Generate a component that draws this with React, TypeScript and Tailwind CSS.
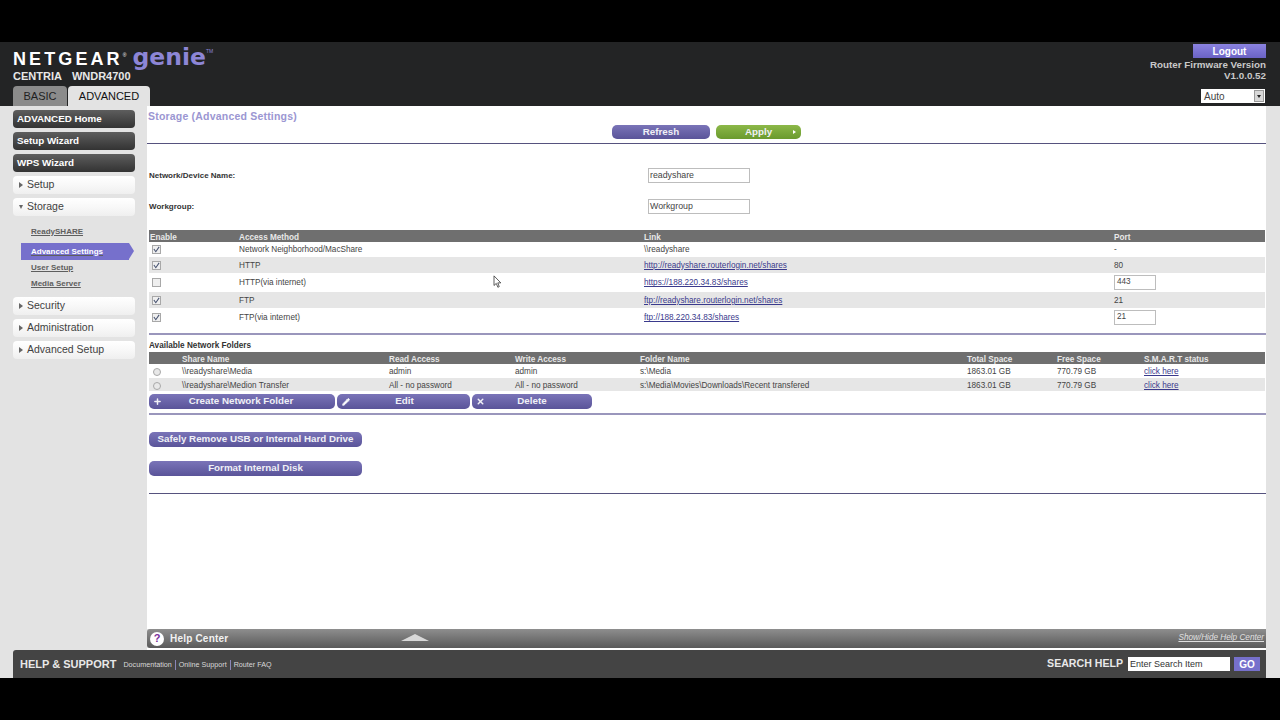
import { Plus, Pencil, X } from "lucide-react";

const accessRows = [
  { on: true, method: "Network Neighborhood/MacShare", link: "\\\\readyshare", isLink: false, port: "-", h: "h-[15px]", alt: false },
  { on: true, method: "HTTP", link: "http://readyshare.routerlogin.net/shares", isLink: true, port: "80", h: "h-[16px]", alt: true },
  { on: false, method: "HTTP(via internet)", link: "https://188.220.34.83/shares", isLink: true, port: "443", input: true, h: "h-[19px]", alt: false },
  { on: true, method: "FTP", link: "ftp://readyshare.routerlogin.net/shares", isLink: true, port: "21", h: "h-[16px]", alt: true },
  { on: true, method: "FTP(via internet)", link: "ftp://188.220.34.83/shares", isLink: true, port: "21", input: true, h: "h-[19px]", alt: false },
];

const folders = [
  { name: "\\\\readyshare\\Media", read: "admin", write: "admin", path: "s:\\Media", h: "h-[14px]", alt: false },
  { name: "\\\\readyshare\\Medion Transfer", read: "All - no password", write: "All - no password", path: "s:\\Media\\Movies\\Downloads\\Recent transfered", h: "h-[13px]", alt: true },
];

const accessCols = "grid grid-cols-[89px_405px_470px_1fr] items-center";
const folderCols = "grid grid-cols-[33px_207px_126px_125px_327px_90px_87px_1fr] items-center";
const purpleBtn = "flex items-center justify-center rounded-[5px] bg-gradient-to-b from-[#7a74b8] to-[#5a5499] text-[#f0f0f6] font-bold text-[9.8px]";
const cell = "pt-[2px]";

function DarkItem({ label }: { label: string }) {
  return (
    <div className="h-[18px] rounded-[4px] bg-gradient-to-b from-[#5e5e5e] to-[#333333] pl-[4px] flex items-center text-[9.8px] font-bold text-white">
      {label}
    </div>
  );
}

function LightItem({ label, open }: { label: string; open?: boolean }) {
  return (
    <div className="h-[18px] rounded-[4px] bg-gradient-to-b from-[#ffffff] via-[#f8f8f8] to-[#efefef] pl-[6px] flex items-center gap-[4px] text-[10.5px] text-[#3f3f3f]">
      <span className={open ? "w-0 h-0 border-x-[2.5px] border-x-transparent border-t-[4px] border-t-[#666666]" : "w-0 h-0 border-y-[3px] border-y-transparent border-l-[4px] border-l-[#666666]"} />
      {label}
    </div>
  );
}

function Check({ on }: { on: boolean }) {
  return (
    <span className="w-[9px] h-[9px] border border-[#a8a8a8] bg-[#efefef] flex items-center justify-center">
      {on && (
        <svg viewBox="0 0 8 8" className="w-[7px] h-[7px]">
          <path d="M1 3.5 L3.2 6.5 L7 1" fill="none" stroke="#44506e" strokeWidth="1.2" />
        </svg>
      )}
    </span>
  );
}

export default function App() {
  return (
    <div className="w-[1280px] h-[720px] overflow-hidden bg-black flex flex-col font-['Liberation_Sans',Arial,sans-serif]">
      <div className="h-[42px] shrink-0" />

      {/* Header */}
      <header className="h-[64px] shrink-0 bg-[#232425] flex justify-between pl-[13px] pr-[14px]">
        <div className="flex flex-col">
          <div className="flex items-start h-[26px]">
            <span className="text-[18px] leading-[20px] font-bold text-white tracking-[3.1px] mt-[7px]">NETGEAR</span>
            <span className="text-[5px] text-white mt-[10px]">®</span>
            <span className="ml-[6px] mt-[2px] text-[23.5px] leading-[26px] font-bold text-[#8d86d6] font-['DejaVu_Sans',sans-serif]">genie</span>
            <span className="text-[5px] text-[#8d86d6] mt-[6px]">TM</span>
          </div>
          <div className="text-[11px] leading-[12px] font-bold text-[#e8e8e8] flex gap-[10px] h-[18px] mt-[2px]">
            <span>CENTRIA</span>
            <span>WNDR4700</span>
          </div>
          <div className="flex gap-[1px] h-[20px] items-end">
            <div className="w-[54px] h-[20px] rounded-t-[4px] bg-[#8b8b8b] flex items-center justify-center text-[11px] text-[#1f1f1f]">BASIC</div>
            <div className="w-[82px] h-[20px] rounded-t-[4px] bg-[#e3e3e3] flex items-center justify-center text-[11px] text-[#111111]">ADVANCED</div>
          </div>
        </div>
        <div className="flex flex-col items-end pt-[2px]">
          <div className="w-[73px] h-[14px] bg-gradient-to-b from-[#8b83e0] to-[#6a62c4] flex items-center justify-center text-[10px] font-bold text-white">Logout</div>
          <div className="mt-[1px] text-[9.8px] leading-[11px] font-bold text-[#c9c9c9] text-right">
            Router Firmware Version
            <br />
            V1.0.0.52
          </div>
          <div className="mt-[8px] mr-[1px] w-[64px] h-[14px] bg-white flex items-center justify-between pl-[3px] pr-[1px] text-[10px] text-[#444444]">
            Auto
            <span className="w-[10px] h-[12px] bg-[#d8d8d8] border border-[#9a9a9a] flex items-center justify-center">
              <span className="w-0 h-0 border-x-[2.5px] border-x-transparent border-t-[3px] border-t-[#222222]" />
            </span>
          </div>
        </div>
      </header>

      {/* Body */}
      <div className="h-[544px] shrink-0 flex bg-[#e3e3e3]">
        <aside className="w-[147px] shrink-0 pt-[4px] pl-[13px] pr-[12px] flex flex-col">
          <div className="flex flex-col gap-[4px]">
            <DarkItem label="ADVANCED Home" />
            <DarkItem label="Setup Wizard" />
            <DarkItem label="WPS Wizard" />
            <LightItem label="Setup" />
            <LightItem label="Storage" open />
          </div>
          <div className="flex flex-col text-[8px] font-bold text-[#5e5e5e] underline mt-[7px] mb-[5px]">
            <div className="h-[17px] pl-[18px] flex items-center">ReadySHARE</div>
            <div className="h-[3px]" />
            <div className="relative h-[17px] w-[108px] ml-[8px] bg-[#7670cc] pl-[10px] flex items-center text-white">
              Advanced Settings
              <span className="absolute left-full top-0 w-0 h-0 border-y-[8.5px] border-y-transparent border-l-[5px] border-l-[#7670cc]" />
            </div>
            <div className="h-[15px] pl-[18px] flex items-center">User Setup</div>
            <div className="h-[17px] pl-[18px] flex items-center">Media Server</div>
          </div>
          <div className="flex flex-col gap-[4px]">
            <LightItem label="Security" />
            <LightItem label="Administration" />
            <LightItem label="Advanced Setup" />
          </div>
        </aside>

        <main className="w-[1119px] shrink-0 flex flex-col">
          <div className="flex-1 bg-white relative">
            <div className="pl-[1px] pt-[1px] h-[19px] text-[10.5px] leading-[19px] font-bold text-[#9b96d2] tracking-[0.2px]">Storage (Advanced Settings)</div>
            <div className="h-[18px] flex pl-[465px] gap-[6px]">
              <div className={`${purpleBtn} w-[98px] h-[14px]`}>Refresh</div>
              <div className="relative w-[85px] h-[14px] rounded-[5px] bg-gradient-to-b from-[#8cb848] to-[#6a9a2e] flex items-center justify-center text-[#f0f0f6] font-bold text-[9.8px]">
                Apply
                <span className="absolute right-[5px] top-[5px] w-0 h-0 border-y-[2.5px] border-y-transparent border-l-[3px] border-l-white" />
              </div>
            </div>
            <div className="h-[1px] bg-[#56527e]" />

            <div className="pl-[2px] pt-[24px] flex items-center h-[39px] text-[8px] font-bold text-[#333333]">
              <span className="w-[499px]">Network/Device Name:</span>
              <span className="w-[102px] h-[15px] border border-[#bdbdbd] pl-[1px] flex items-center font-normal text-[8.8px] text-[#444444]">readyshare</span>
            </div>
            <div className="pl-[2px] pt-[16px] flex items-center h-[31px] text-[8px] font-bold text-[#333333]">
              <span className="w-[499px]">Workgroup:</span>
              <span className="w-[102px] h-[15px] border border-[#bdbdbd] pl-[1px] flex items-center font-normal text-[8.8px] text-[#444444]">Workgroup</span>
            </div>

            <div className="mt-[16px] ml-[2px] mr-[1px] text-[8.2px] text-[#444444]">
              <div className={`${accessCols} h-[12px] bg-[#6f6f6f] pl-[1px] font-bold text-[#e8e8e8]`}>
                <span className={cell}>Enable</span>
                <span className={cell}>Access Method</span>
                <span className={cell}>Link</span>
                <span className={cell}>Port</span>
              </div>
              {accessRows.map((row) => (
                <div key={row.method} className={`${accessCols} ${row.h} pl-[1px] ${row.alt ? "bg-[#e6e6e6]" : "bg-white"}`}>
                  <span className="pl-[2px]"><Check on={row.on} /></span>
                  <span className={cell}>{row.method}</span>
                  {row.isLink ? <a href="#" className={`${cell} underline text-[#3a3a8c]`}>{row.link}</a> : <span className={cell}>{row.link}</span>}
                  {row.input ? (
                    <span className="w-[42px] h-[15px] border border-[#bdbdbd] bg-white pl-[2px] flex items-center">{row.port}</span>
                  ) : (
                    <span className={cell}>{row.port}</span>
                  )}
                </div>
              ))}
            </div>
            <div className="mt-[6px] ml-[2px] h-[2px] bg-[#9a96bc]" />

            <div className="ml-[2px] mt-[5px] h-[11px] text-[8.2px] leading-[11px] font-bold text-[#333333]">Available Network Folders</div>
            <div className="mt-[1px] ml-[2px] mr-[1px] text-[8.2px] text-[#444444]">
              <div className={`${folderCols} h-[12px] bg-[#6f6f6f] font-bold text-[#e8e8e8]`}>
                <span />
                <span className={cell}>Share Name</span>
                <span className={cell}>Read Access</span>
                <span className={cell}>Write Access</span>
                <span className={cell}>Folder Name</span>
                <span className={cell}>Total Space</span>
                <span className={cell}>Free Space</span>
                <span className={cell}>S.M.A.R.T status</span>
              </div>
              {folders.map((f) => (
                <div key={f.name} className={`${folderCols} ${f.h} ${f.alt ? "bg-[#e6e6e6]" : "bg-white"}`}>
                  <span className="pl-[4px] pt-[2px]"><span className="block w-[8px] h-[8px] rounded-full border border-[#a8a8a8] bg-[#e8e8e8]" /></span>
                  <span className={cell}>{f.name}</span>
                  <span className={cell}>{f.read}</span>
                  <span className={cell}>{f.write}</span>
                  <span className={cell}>{f.path}</span>
                  <span className={cell}>1863.01 GB</span>
                  <span className={cell}>770.79 GB</span>
                  <a href="#" className={`${cell} underline text-[#3a3a8c]`}>click here</a>
                </div>
              ))}
            </div>

            <div className="ml-[2px] mt-[3px] flex gap-[2px]">
              <div className={`${purpleBtn} relative w-[186px] h-[15px]`}>
                <Plus size={9} strokeWidth={4} className="absolute left-[4px] top-[3px]" />
                <span className="mr-[2px]">Create Network Folder</span>
              </div>
              <div className={`${purpleBtn} relative w-[133px] h-[15px]`}>
                <Pencil size={8} strokeWidth={3} fill="white" className="absolute left-[5px] top-[3.5px]" />
                <span className="ml-[2px]">Edit</span>
              </div>
              <div className={`${purpleBtn} relative w-[120px] h-[15px]`}>
                <X size={9} strokeWidth={4} className="absolute left-[4px] top-[3px]" />
                Delete
              </div>
            </div>
            <div className="mt-[4px] ml-[2px] h-[2px] bg-[#9a96bc]" />

            <div className={`${purpleBtn} ml-[2px] mt-[17px] w-[213px] h-[15px]`}>Safely Remove USB or Internal Hard Drive</div>
            <div className={`${purpleBtn} ml-[2px] mt-[14px] w-[213px] h-[15px]`}>Format Internal Disk</div>
            <div className="mt-[17px] ml-[2px] h-[1px] bg-[#56527e]" />

            {/* mouse pointer from the capture */}
            <svg viewBox="0 0 10 16" className="absolute left-[346px] top-[169px] w-[9px] h-[14px]">
              <path d="M1 1 L1 12 L3.6 9.6 L5.4 14 L7 13.3 L5.3 9 L8.8 9 Z" fill="white" stroke="#333333" strokeWidth="0.9" />
            </svg>
          </div>

          <div className="h-[19px] shrink-0 rounded-l-[3px] bg-gradient-to-b from-[#8e8e8e] to-[#5a5a5a] relative flex items-center pl-[3px] text-white">
            <span className="w-[14px] h-[14px] rounded-full bg-white flex items-center justify-center text-[11px] font-bold text-[#7a2f9a]">?</span>
            <span className="ml-[6px] text-[10px] font-bold text-[#f2f2f2] tracking-[0.2px]">Help Center</span>
            <span className="absolute left-[254px] top-[5px] w-0 h-0 border-x-[14px] border-x-transparent border-b-[7px] border-b-[#d8d8d8]" />
            <a href="#" className="ml-auto mr-[2px] text-[8.2px] italic underline text-[#e0e0e0]">Show/Hide Help Center</a>
          </div>
          <div className="h-[2px] shrink-0 bg-white" />
        </main>
      </div>

      {/* Footer */}
      <div className="h-[28px] shrink-0 bg-[#e3e3e3] pl-[13px] pr-[14px]">
        <footer className="h-full rounded-tl-[3px] bg-[#444444] flex items-center justify-between pl-[7px] pr-[6px]">
          <div className="flex items-center">
            <span className="text-[11px] font-bold text-[#e8e8e8]">HELP &amp; SUPPORT</span>
            <span className="ml-[7px] mt-[2px] text-[7.2px] text-[#d8d8d8] pr-[3px] border-r border-[#8a86b8]">Documentation</span>
            <span className="mt-[2px] text-[7.2px] text-[#d8d8d8] px-[3px] border-r border-[#8a86b8]">Online Support</span>
            <span className="mt-[2px] text-[7.2px] text-[#d8d8d8] pl-[3px]">Router FAQ</span>
          </div>
          <div className="flex items-center">
            <span className="text-[10.6px] font-bold text-[#e8e8e8]">SEARCH HELP</span>
            <span className="ml-[5px] mt-[1px] w-[102px] h-[14px] bg-white pl-[2px] flex items-center text-[9px] text-[#333333]">Enter Search Item</span>
            <span className="ml-[4px] mt-[1px] w-[26px] h-[14px] bg-[#7670cc] flex items-center justify-center text-[10px] font-bold text-white">GO</span>
          </div>
        </footer>
      </div>
      <div className="flex-1" />
    </div>
  );
}
